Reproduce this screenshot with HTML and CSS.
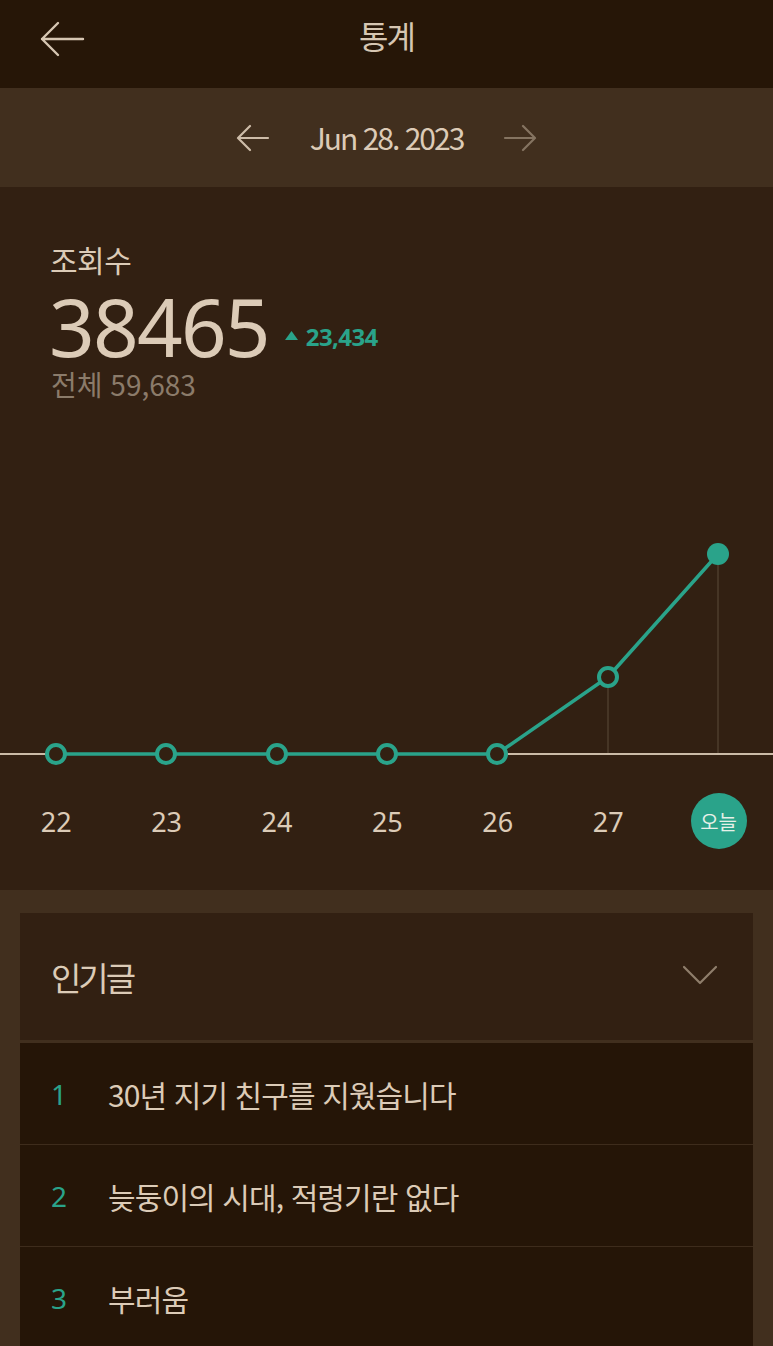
FILE: index.html
```html
<!DOCTYPE html>
<html lang="ko">
<head>
    <meta charset="UTF-8">
    <meta name="viewport" content="width=device-width, initial-scale=1.0">
    <title>통계</title>
    <link rel="stylesheet" href="styles.css">
</head>
<body>
    <header class="topbar">
        <svg class="back" width="46" height="36" viewBox="0 0 46 36">
            <path d="M44 18H3M19 2L3 18L19 34" fill="none" stroke="#d6c6b2" stroke-width="2.4" stroke-linecap="round" stroke-linejoin="round"/>
        </svg>
        <h1 class="title">통계</h1>
    </header>

    <div class="datebar">
        <svg class="arrow" width="34" height="28" viewBox="0 0 34 28">
            <path d="M32 14H3M14 2L2 14L14 26" fill="none" stroke="#cdbca8" stroke-width="2.2" stroke-linecap="round" stroke-linejoin="round"/>
        </svg>
        <span class="date">Jun 28. 2023</span>
        <svg class="arrow dim" width="34" height="28" viewBox="0 0 34 28">
            <path d="M2 14H31M20 2L32 14L20 26" fill="none" stroke="#857461" stroke-width="2.2" stroke-linecap="round" stroke-linejoin="round"/>
        </svg>
    </div>

    <section class="stats">
        <div class="label">조회수</div>
        <div class="count-row">
            <span class="count">38465</span>
            <span class="diff">
                <svg class="tri" width="13" height="9" viewBox="0 0 13 9"><path d="M6.5 0L13 9H0Z" fill="#2aa38a"/></svg>23,434
            </span>
        </div>
        <div class="total">전체 59,683</div>

        <!-- 주간 그래프 -->
        <svg class="chart" width="773" height="250" viewBox="0 0 773 250">
            <line x1="608" y1="157" x2="608" y2="234" stroke="#4e3c2c" stroke-width="1.5"/>
            <line x1="718" y1="34" x2="718" y2="234" stroke="#4e3c2c" stroke-width="1.5"/>
            <line x1="0" y1="234" x2="773" y2="234" stroke="#cbbba7" stroke-width="2"/>
            <polyline points="56,234 166,234 277,234 387,234 497,234 608,157 718,34" fill="none" stroke="#2aa38a" stroke-width="3.5" stroke-linejoin="round"/>
            <g fill="#322012" stroke="#2aa38a" stroke-width="4">
                <circle cx="56" cy="234" r="9"/>
                <circle cx="166" cy="234" r="9"/>
                <circle cx="277" cy="234" r="9"/>
                <circle cx="387" cy="234" r="9"/>
                <circle cx="497" cy="234" r="9"/>
                <circle cx="608" cy="157" r="9"/>
            </g>
            <circle cx="718" cy="34" r="11" fill="#2aa38a"/>
        </svg>

        <div class="days">
            <span>22</span>
            <span>23</span>
            <span>24</span>
            <span>25</span>
            <span>26</span>
            <span>27</span>
            <span><span class="today">오늘</span></span>
        </div>
    </section>

    <section class="popular">
        <div class="card">
            <div class="card-head">
                <span>인기글</span>
                <svg width="36" height="20" viewBox="0 0 36 20">
                    <path d="M2 2L18 18L34 2" fill="none" stroke="#8f7e6b" stroke-width="2.2" stroke-linecap="round" stroke-linejoin="round"/>
                </svg>
            </div>
            <ul class="posts">
                <li><span class="rank">1</span>30년 지기 친구를 지웠습니다</li>
                <li><span class="rank">2</span>늦둥이의 시대, 적령기란 없다</li>
                <li><span class="rank">3</span>부러움</li>
            </ul>
        </div>
    </section>
</body>
</html>
```

FILE: styles.css
```css
body {
    margin: 0;
    padding: 0;
    background-color: #412f1e;
    font-family: "Noto Sans CJK KR", "Noto Sans", sans-serif;
    color: #dccbb7;
}
.topbar {
    height: 88px;
    background-color: #261607;
    display: flex;
    justify-content: center;
    position: relative;
}
.back {
    position: absolute;
    left: 39px;
    top: 21px;
}
.title {
    margin: 0;
    padding-top: 12px;
    font-size: 32px;
    line-height: 46px;
    font-weight: normal;
    color: #d6c6b2;
    letter-spacing: -2px;
}
.datebar {
    height: 99px;
    background-color: #412f1e;
    display: flex;
    align-items: center;
    justify-content: center;
    gap: 40px;
}
.date {
    font-size: 30px;
    letter-spacing: -2px;
    color: #dccbb7;
    margin-bottom: 2px;
}
.stats {
    background-color: #322012;
    padding-top: 50px;
    height: 703px;
    box-sizing: border-box;
}
.label {
    margin-left: 50px;
    font-size: 30px;
    line-height: 44px;
    letter-spacing: -0.5px;
}
.count-row {
    margin-left: 49px;
    margin-top: 5px;
    display: flex;
    align-items: center;
    gap: 16px;
    height: 80px;
}
.count {
    font-family: "Noto Sans", sans-serif;
    font-size: 80px;
    letter-spacing: -1.8px;
    line-height: 80px;
    color: #dccbb7;
}
.diff {
    display: flex;
    align-items: center;
    gap: 8px;
    font-family: "Noto Sans", sans-serif;
    font-weight: bold;
    font-size: 24px;
    line-height: 30px;
    letter-spacing: -0.6px;
    color: #2aa38a;
    margin-top: 22px;
}
.tri {
    margin-top: -4px;
}
.total {
    margin-left: 51px;
    font-size: 28px;
    line-height: 36px;
    color: #8b7b6a;
}
.chart {
    display: block;
    margin-top: 118px;
}
.days {
    display: grid;
    grid-template-columns: repeat(7, 110.4px);
    padding-left: 1px;
    margin-top: 23px;
}
.days > span {
    display: flex;
    justify-content: center;
    align-items: center;
    height: 56px;
    font-family: "Noto Sans", sans-serif;
    font-size: 27px;
}
.today {
    width: 56px;
    height: 56px;
    border-radius: 50%;
    background-color: #2aa38a;
    display: flex;
    align-items: center;
    justify-content: center;
    font-family: "Noto Sans CJK KR", sans-serif;
    font-size: 20px;
    color: #e6f0e8;
}
.popular {
    padding: 23px 20px 0;
}
.card {
    background-color: #251507;
}
.card-head {
    height: 127px;
    background-color: #322012;
    display: flex;
    align-items: center;
    justify-content: space-between;
    padding: 0 35px 0 31px;
    border-bottom: 3px solid #412f1e;
    font-size: 33px;
    letter-spacing: -3px;
}
.card-head svg {
    margin-top: -4px;
}
.posts {
    list-style: none;
    margin: 0;
    padding: 0;
}
.posts li {
    height: 101px;
    display: flex;
    align-items: center;
    border-bottom: 1px solid #3e2c1c;
    font-size: 30px;
    letter-spacing: -0.9px;
    padding-left: 31px;
}
.rank {
    width: 57px;
    color: #2aa38a;
    font-family: "Noto Sans", sans-serif;
    font-size: 28px;
}
```
